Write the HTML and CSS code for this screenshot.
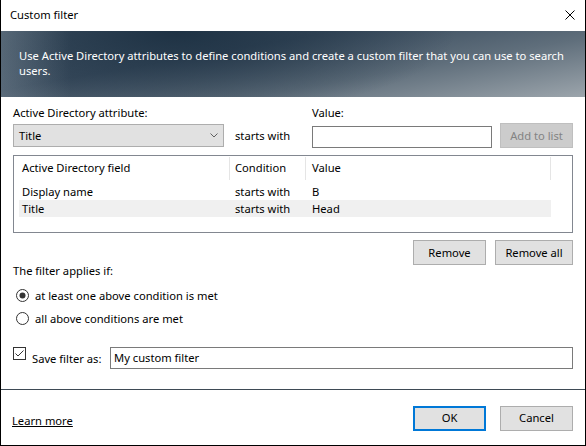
FILE: index.html
```html
<!DOCTYPE html>
<html>
<head>
<meta charset="utf-8">
<link rel="stylesheet" href="styles.css">
</head>
<body>
<div class="window">
  <div class="titlebar">
    <span class="title">Custom filter</span>
    <svg class="close" width="10" height="10" viewBox="0 0 10 10"><path d="M0.5 0.5 L9.5 9.5 M9.5 0.5 L0.5 9.5" stroke="#000" stroke-width="1" fill="none"/></svg>
  </div>
  <div class="banner">
    <p>Use Active Directory attributes to define conditions and create a custom filter that you can use to search users.</p>
  </div>
  <div class="content">
    <div class="attr-row">
      <div class="attr-col">
        <div class="label">Active Directory attribute:</div>
        <div class="select">
          <span>Title</span>
          <svg width="8" height="5" viewBox="0 0 8 5"><polyline points="0.5,0.5 4,4 7.5,0.5" stroke="#606060" stroke-width="1" fill="none"/></svg>
        </div>
      </div>
      <div class="cond">starts with</div>
      <div class="value-col">
        <div class="label">Value:</div>
        <div class="input"></div>
      </div>
      <button class="btn disabled add">Add to list</button>
    </div>

    <div class="list">
      <div class="list-head">
        <div class="hcell c1">Active Directory field</div>
        <div class="hcell c2">Condition</div>
        <div class="hcell c3">Value</div>
      </div>
      <div class="list-body">
        <div class="row">
          <div class="cell c1">Display name</div>
          <div class="cell c2">starts with</div>
          <div class="cell c3">B</div>
        </div>
        <div class="row selected">
          <div class="cell c1">Title</div>
          <div class="cell c2">starts with</div>
          <div class="cell c3">Head</div>
        </div>
      </div>
    </div>

    <div class="actions-row">
      <div class="label">The filter applies if:</div>
      <div class="actions">
        <button class="btn remove">Remove</button>
        <button class="btn remove-all">Remove all</button>
      </div>
    </div>

    <div class="radios">
      <div class="radio-row">
        <svg width="13" height="13" viewBox="0 0 13 13"><circle cx="6.5" cy="6.5" r="6" stroke="#333" stroke-width="1" fill="#fff"/><circle cx="6.5" cy="6.5" r="3" fill="#333"/></svg>
        <span>at least one above condition is met</span>
      </div>
      <div class="radio-row">
        <svg width="13" height="13" viewBox="0 0 13 13"><circle cx="6.5" cy="6.5" r="6" stroke="#333" stroke-width="1" fill="#fff"/></svg>
        <span>all above conditions are met</span>
      </div>
    </div>

    <div class="save-row">
      <svg class="check" width="13" height="13" viewBox="0 0 13 13"><rect x="0.5" y="0.5" width="12" height="12" stroke="#333" stroke-width="1" fill="#fff"/><polyline points="2.5,6.5 5,9 10.5,3.5" stroke="#333" stroke-width="1" fill="none"/></svg>
      <span class="save-label">Save filter as:</span>
      <div class="input save-input">My custom filter</div>
    </div>
  </div>
  <div class="footer">
    <a class="learn">Learn more</a>
    <div class="footer-buttons">
      <button class="btn ok">OK</button>
      <button class="btn cancel">Cancel</button>
    </div>
  </div>
</div>
</body>
</html>
```

FILE: styles.css
```css
* { box-sizing: border-box; }
html, body { margin: 0; padding: 0; background: #fff; }
body {
  font-family: "Noto Sans", "DejaVu Sans", sans-serif;
  font-size: 11.2px;
  line-height: 16px;
  color: #000;
}
.window {
  width: 586px;
  height: 446px;
  border: 1px solid #000;
  border-top: none;
  display: flex;
  flex-direction: column;
  background: #fff;
}
.titlebar {
  height: 31px;
  flex: none;
  display: flex;
  align-items: center;
  justify-content: space-between;
  padding: 0 10px 1px 9px;
}
.close { display: block; }
.banner {
  height: 66px;
  flex: none;
  padding: 17px 18px 0 18px;
  color: #fff;
  background:
    linear-gradient(to right, rgba(125, 140, 152, 0.45) 0, rgba(125, 140, 152, 0) 70px),
    radial-gradient(ellipse 280px 85px at 30% 0%, rgba(26, 46, 64, 0.9), rgba(26, 46, 64, 0) 100%),
    linear-gradient(170deg, #46586a 0%, #3c4e60 35%, #5f6e7b 65%, #9ca5ac 100%);
}
.banner p { margin: 0; line-height: 15px; }
.content {
  flex: 1;
  padding: 8px 12px 0 12px;
}
.attr-row {
  display: flex;
  align-items: flex-end;
}
.attr-col { width: 211px; margin-bottom: 1px; }
.attr-col .label { margin-bottom: 3px; }
.select {
  height: 23px;
  background: #e1e1e1;
  border: 1px solid #adadad;
  display: flex;
  align-items: center;
  justify-content: space-between;
  padding: 0 5px 0 5px;
}
.select svg { display: block; }
.cond {
  width: 88px;
  padding-left: 11px;
  height: 23px;
  line-height: 23px;
  margin-bottom: 1px;
}
.value-col { width: 180px; }
.value-col .label { margin-bottom: 5px; }
.input {
  height: 22px;
  border: 1px solid #7a7a7a;
  background: #fff;
}
.btn {
  font-family: inherit;
  font-size: 11.2px;
  line-height: 16px;
  color: #000;
  background: #e1e1e1;
  border: 1px solid #adadad;
  height: 25px;
  padding: 0;
  margin: 0;
}
.add {
  width: 73px;
  margin-left: 8px;
  background: #cccccc;
  border-color: #bfbfbf;
  color: #838383;
}
.list {
  margin-top: 7px;
  height: 78px;
  border: 1px solid #828790;
  background: #fff;
}
.list-head, .row {
  display: grid;
  grid-template-columns: 211px 76px 245px;
  margin-left: 5px;
  width: 532px;
}
.list-head { height: 24px; padding-top: 1px; }
.hcell {
  border-right: 1px solid #e5e5e5;
  height: 23px;
  line-height: 22px;
}
.list-body { padding-top: 3px; }
.row { height: 17px; line-height: 17px; }
.row.selected { background: #f0f0f0; }
.c1 { padding-left: 3px; }
.c2 { padding-left: 5px; }
.c3 { padding-left: 6px; }
.actions-row {
  margin-top: 7px;
  display: flex;
  justify-content: space-between;
  align-items: flex-end;
}
.actions {
  display: flex;
  gap: 9px;
  margin-bottom: 14px;
}
.remove { width: 73px; }
.remove-all { width: 78px; }
.radios { margin-top: 5px; }
.radio-row {
  height: 23px;
  display: flex;
  align-items: center;
  padding-left: 3px;
  gap: 6px;
}
.radio-row svg { display: block; }
.save-row {
  margin-top: 17px;
  display: flex;
  align-items: center;
}
.check { display: block; align-self: flex-start; }
.save-label {
  width: 84px;
  padding-left: 6px;
  padding-top: 1px;
}
.save-input {
  flex: 1;
  padding-left: 3px;
  line-height: 20px;
}
.footer {
  height: 56px;
  flex: none;
  border-top: 1px solid #3e4a55;
  display: flex;
  align-items: center;
  justify-content: space-between;
  padding: 0 12px 0 11px;
}
.learn {
  text-decoration: underline;
  color: #000;
  padding-top: 6px;
}
.footer-buttons { display: flex; gap: 14px; margin-top: 1px; }
.ok { width: 73px; border: 2px solid #0078d7; }
.cancel { width: 73px; }
```
